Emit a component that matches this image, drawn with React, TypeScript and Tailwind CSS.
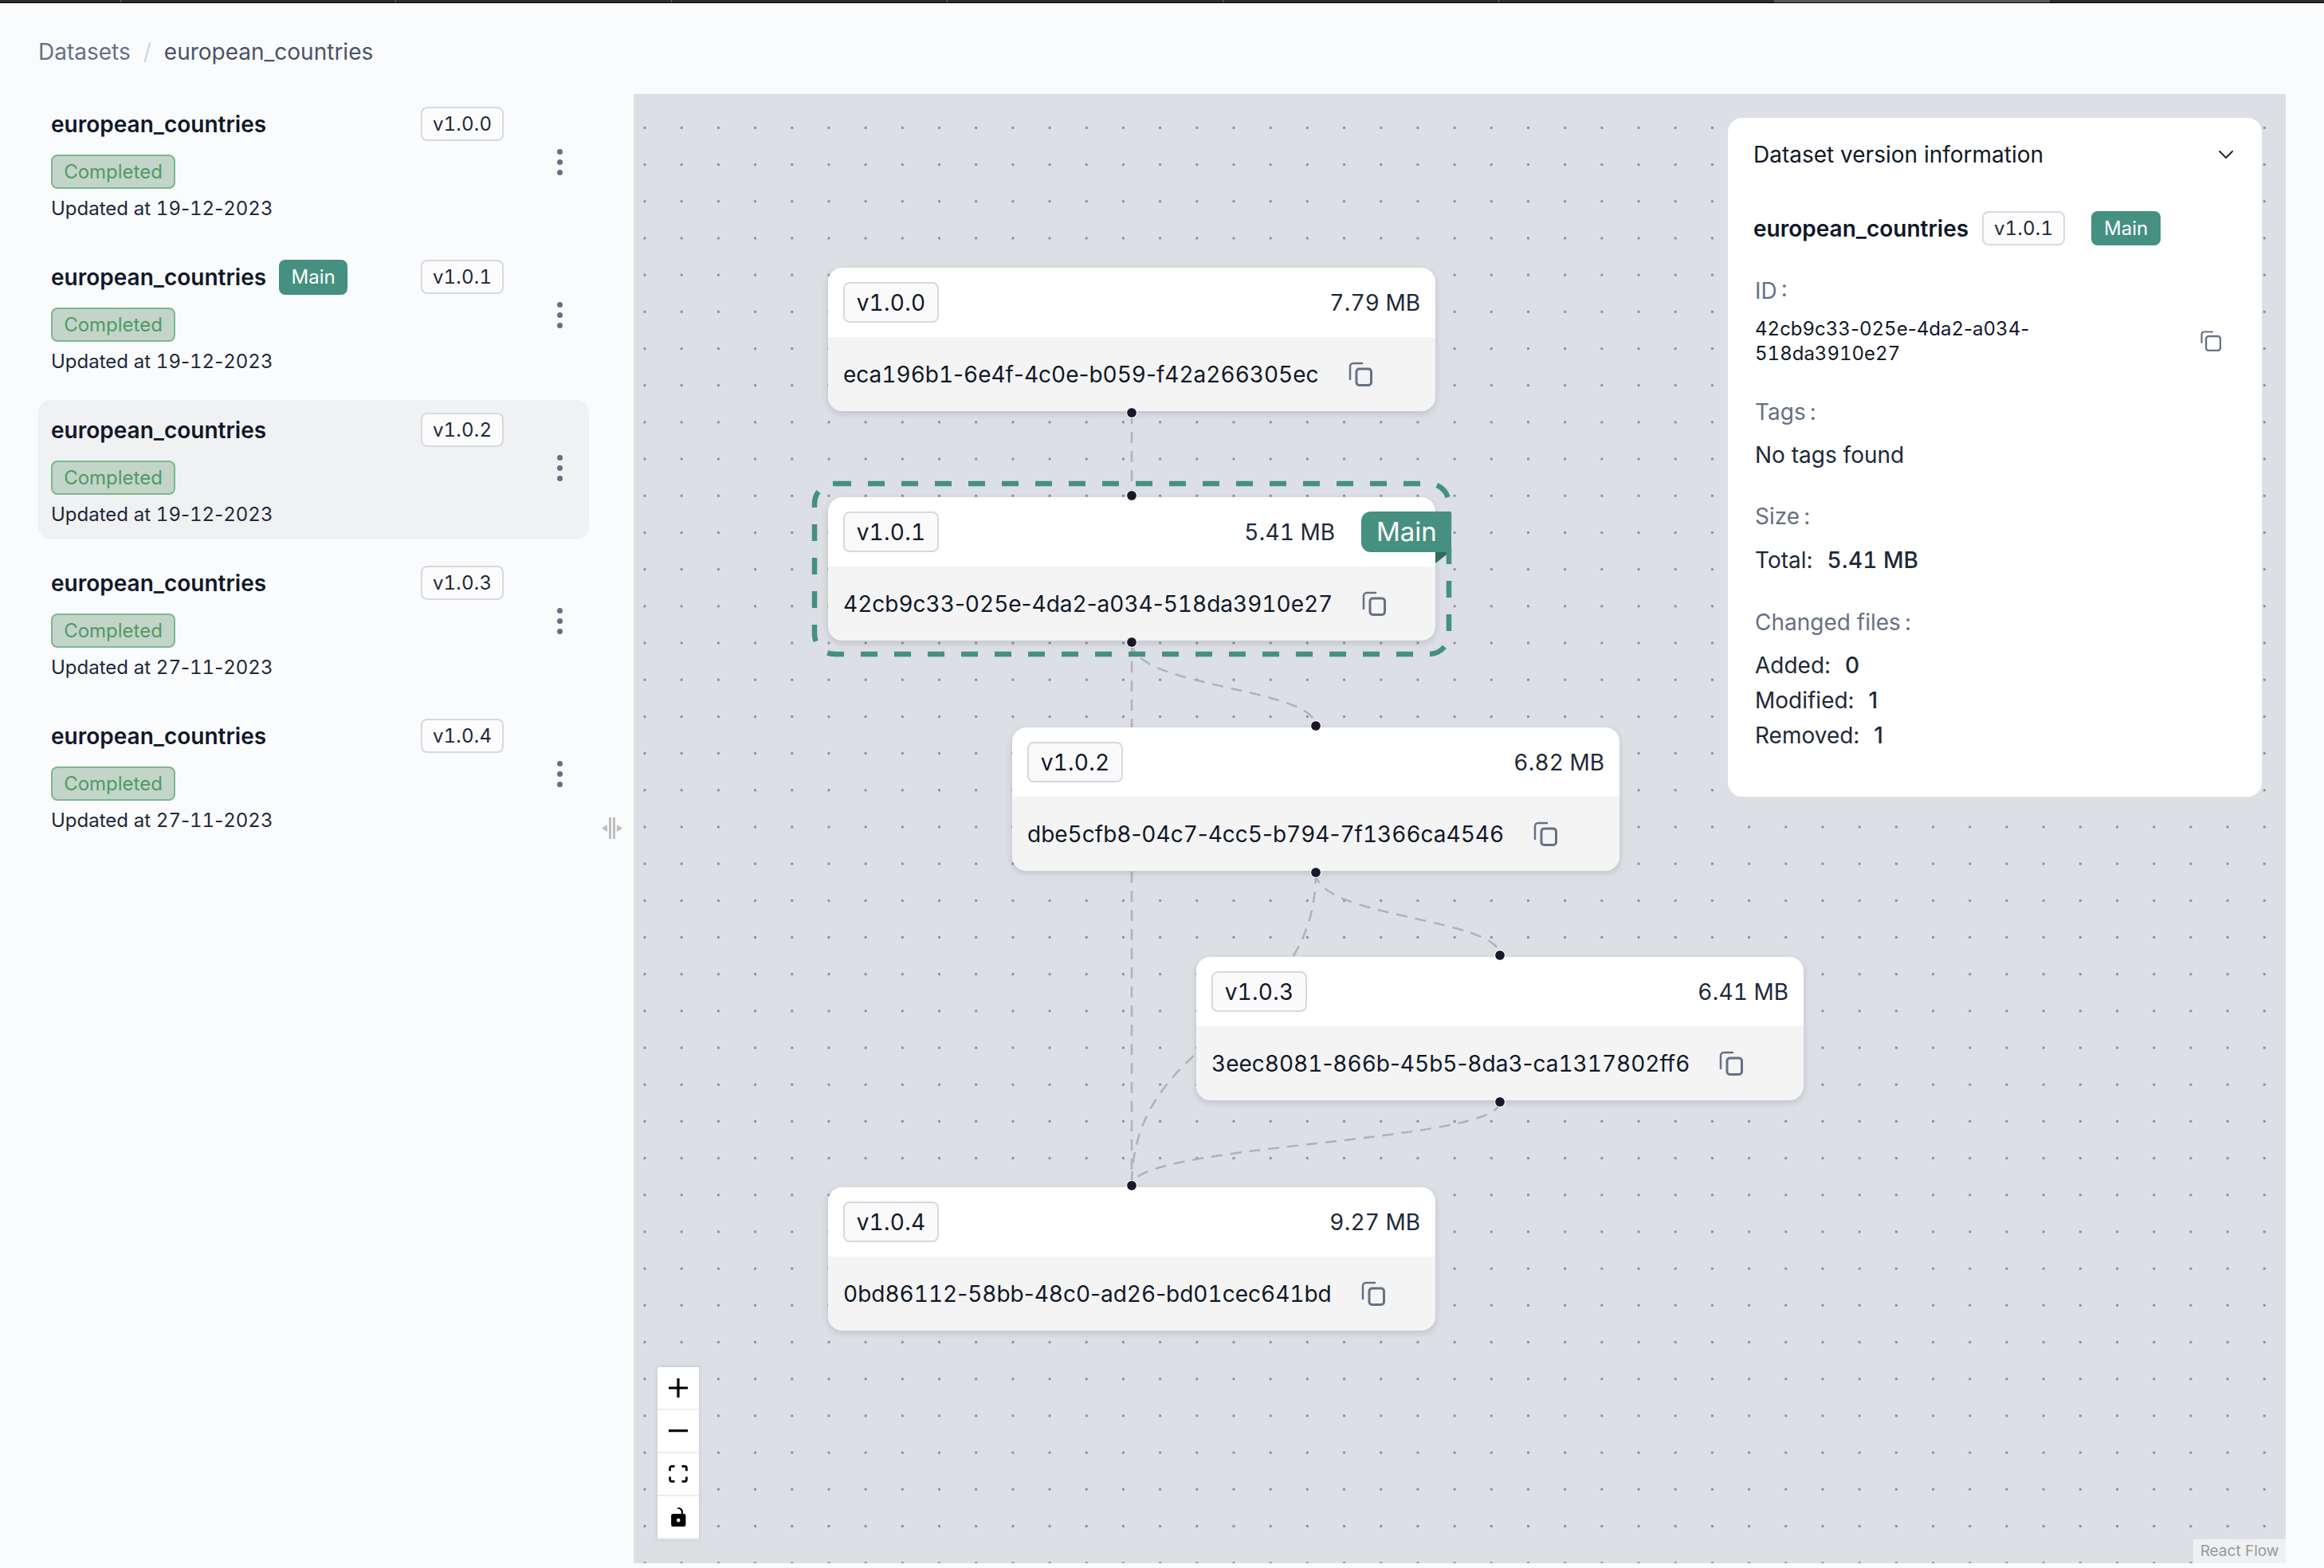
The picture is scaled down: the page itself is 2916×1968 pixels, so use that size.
import { ChevronDown } from "lucide-react";

const versions = [
  { version: "v1.0.0", date: "19-12-2023" },
  { version: "v1.0.1", date: "19-12-2023", main: true },
  { version: "v1.0.2", date: "19-12-2023", selected: true },
  { version: "v1.0.3", date: "27-11-2023" },
  { version: "v1.0.4", date: "27-11-2023" },
];

// digits are wide in the screenshot's Inter, hyphens and dots are not
function Digits({ text }: { text: string }) {
  return (
    <>
      {text.split(/([-.])/).map((part, i) =>
        i % 2 === 0 ? (
          <span key={i} className="tabular-nums">
            {part}
          </span>
        ) : (
          <span key={i}>{part}</span>
        )
      )}
    </>
  );
}

function CopyIcon({ className }: { className: string }) {
  return (
    <svg viewBox="0 0 30 31" fill="none" className={className}>
      <path d="M2 22V6a4 4 0 0 1 4-4h11" stroke="#667085" strokeWidth="2.5" strokeLinecap="round" />
      <rect x="10" y="9" width="18.5" height="20.5" rx="3.5" stroke="#667085" strokeWidth="3" />
    </svg>
  );
}

function SmallCopyIcon() {
  return (
    <svg viewBox="0 0 26 26" fill="none" className="w-[26px] h-[26px] shrink-0">
      <path d="M1.5 15V4.5a3 3 0 0 1 3-3H15" stroke="#667085" strokeWidth="2.2" strokeLinecap="round" />
      <rect x="7" y="7" width="18" height="18" rx="3.5" stroke="#667085" strokeWidth="2.4" />
    </svg>
  );
}

function VersionItem({ item }: { item: (typeof versions)[number] }) {
  return (
    <div className={`flex rounded-[16px] pl-4 pt-4 h-[175px] ${item.selected ? "bg-[#f0f1f3]" : ""}`}>
      <div className="w-[568px]">
        <div className="flex items-center h-[43px]">
          <span className="text-[28px] font-semibold text-[#101828]">european_countries</span>
          {item.main && (
            <span className="ml-[16px] w-[86px] h-[44px] rounded-[8px] bg-[#459080] text-white text-[24px] flex items-center justify-center">
              Main
            </span>
          )}
          <span className="ml-auto w-[104px] h-[43px] rounded-[8px] border-2 border-[#d5d9e0] bg-[#fcfcfd] text-[24px] text-[#1d2939] flex items-center justify-center">
            <Digits text={item.version} />
          </span>
        </div>
        <div className="mt-[17px] w-[156px] h-[43px] rounded-[8px] border-2 border-[#7cb88d] bg-[#c2d5c8] text-[24px] text-[#4f9a66] flex items-center justify-center">
          Completed
        </div>
        <p className="mt-[10px] text-[24px] leading-[30px] text-[#1d2939]">
          Updated at <Digits text={item.date} />
        </p>
      </div>
      <div className="ml-[67px] mt-[53px] flex flex-col gap-[6px] self-start">
        <span className="w-[7px] h-[7px] rounded-full bg-[#667085]" />
        <span className="w-[7px] h-[7px] rounded-full bg-[#667085]" />
        <span className="w-[7px] h-[7px] rounded-full bg-[#667085]" />
      </div>
    </div>
  );
}

function FlowNode({
  className,
  version,
  size,
  id,
  main,
  noTop,
  noBottom,
}: {
  className: string;
  version: string;
  size: string;
  id: string;
  main?: boolean;
  noTop?: boolean;
  noBottom?: boolean;
}) {
  return (
    <div className={`absolute w-[762px] h-[180px] rounded-[18px] shadow-[0_3px_8px_rgba(16,24,40,0.14)] ${className}`}>
      {!noTop && (
        <span className="absolute left-[375px] -top-[8px] w-[12px] h-[12px] rounded-full bg-[#1a192b] outline outline-white" />
      )}
      <div className="h-[87px] rounded-t-[18px] bg-white flex items-center pl-[19px] pr-[19px]">
        <span className="w-[120px] h-[51px] rounded-[8px] border-2 border-[#d5d9e0] bg-[#fafafb] text-[28px] text-[#101828] flex items-center justify-center">
          <Digits text={version} />
        </span>
        <span className={`ml-auto text-[28px] text-[#1d2939] ${main ? "mr-[107px]" : ""}`}>
          <Digits text={size} />
        </span>
      </div>
      <div className="h-[93px] rounded-b-[18px] bg-[#f4f4f5] flex items-center px-[19px] gap-[37px]">
        <span className="text-[28px] whitespace-nowrap text-[#101828]">
          <Digits text={id} />
        </span>
        <CopyIcon className="w-[30px] h-[31px] shrink-0" />
      </div>
      {!noBottom && (
        <span className="absolute left-[375px] -bottom-[8px] w-[12px] h-[12px] rounded-full bg-[#1a192b] outline outline-white" />
      )}
      {main && (
        <>
          <span className="absolute -right-[20px] top-[18px] w-[113px] h-[51px] rounded-l-[12px] bg-[#459080] text-white text-[33px] flex items-center pl-[19px]">
            Main
          </span>
          <svg viewBox="0 0 18 14" className="absolute -right-[18px] top-[69px] w-[18px] h-[14px]">
            <path d="M0 0h18L0 14z" fill="#2f6b5e" />
          </svg>
        </>
      )}
    </div>
  );
}

function Edges() {
  const edges = [
    "M1420 518V622",
    "M1420 806V1488",
    "M1420 806C1420 863 1651 863 1651 911",
    "M1651 1095C1651 1152 1882 1152 1882 1199",
    "M1651 1095C1651 1292 1420 1292 1420 1488",
    "M1882 1383C1882 1435 1420 1435 1420 1488",
  ];
  return (
    <svg viewBox="795 118 2073 1844" className="absolute inset-0 w-full h-full">
      {edges.map((d) => (
        <path key={d} d={d} fill="none" stroke="#b1b1b7" strokeWidth="2.5" strokeDasharray="14 10" />
      ))}
    </svg>
  );
}

function InfoPanel() {
  return (
    <div className="absolute top-[30px] right-[30px] w-[670px] h-[852px] rounded-[18px] bg-white pl-[32px] pr-[36px] text-[#1d2939]">
      <div className="h-[92px] flex items-center justify-between">
        <span className="text-[28px] text-[#101828]">Dataset version information</span>
        <ChevronDown className="w-[36px] h-[32px] text-[#1d2939] -mr-[9px]" strokeWidth={1.5} />
      </div>
      <div className="flex items-center h-[43px] mt-[25px]">
        <span className="text-[28px] font-semibold text-[#101828]">european_countries</span>
        <span className="ml-[17px] w-[104px] h-[43px] rounded-[8px] border-2 border-[#d5d9e0] bg-[#fcfcfd] text-[24px] flex items-center justify-center">
          <Digits text="v1.0.1" />
        </span>
        <span className="ml-[33px] w-[87px] h-[43px] rounded-[8px] bg-[#459080] text-white text-[24px] flex items-center justify-center">
          Main
        </span>
      </div>
      <div className="pl-[2px]">
        <p className="mt-[40px] text-[28px] leading-[34px] text-[#667085]">ID&thinsp;:</p>
        <div className="mt-[15px] flex items-center justify-between pr-[15px]">
          <p className="w-[400px] text-[24px] leading-[31px] text-[#101828]">
            <Digits text="42cb9c33-025e-4da2-a034-518da3910e27" />
          </p>
          <SmallCopyIcon />
        </div>
        <p className="mt-[41px] text-[28px] leading-[34px] text-[#667085]">Tags&thinsp;:</p>
        <p className="mt-[20px] text-[28px] leading-[34px]">No tags found</p>
        <p className="mt-[43px] text-[28px] leading-[34px] text-[#667085]">Size&thinsp;:</p>
        <p className="mt-[21px] text-[28px] leading-[34px]">
          Total:{" "}
          <span className="ml-[10px] font-medium">
            <Digits text="5.41 MB" />
          </span>
        </p>
        <p className="mt-[44px] text-[28px] leading-[34px] text-[#667085]">Changed files&thinsp;:</p>
        <p className="mt-[20px] text-[28px] leading-[34px]">
          Added: <span className="ml-[10px] font-medium">0</span>
        </p>
        <p className="mt-[10px] text-[28px] leading-[34px]">
          Modified: <span className="ml-[10px] font-medium">1</span>
        </p>
        <p className="mt-[10px] text-[28px] leading-[34px]">
          Removed: <span className="ml-[10px] font-medium">1</span>
        </p>
      </div>
    </div>
  );
}

const controlIcons = [
  { box: "0 0 32 32", cls: "w-[24px] h-[24px]", d: "M32 18.133H18.133V32h-4.266V18.133H0v-4.266h13.867V0h4.266v13.867H32z" },
  { box: "0 0 32 5", cls: "w-[24px] h-[4px]", d: "M0 0h32v4.2H0z" },
  {
    box: "0 0 32 30",
    cls: "w-[24px] h-[22px]",
    d: "M3.692 4.63c0-.53.4-.938.939-.938h5.215V0H4.708C2.13 0 0 2.054 0 4.63v5.216h3.692V4.631zM27.354 0h-5.2v3.692h5.17c.53 0 .984.4.984.939v5.215H32V4.631A4.624 4.624 0 0027.354 0zm.954 24.83c0 .532-.4.94-.939.94h-5.215v3.768h5.215c2.577 0 4.631-2.13 4.631-4.707v-5.139h-3.692v5.139zm-23.677.94c-.531 0-.939-.4-.939-.94v-5.138H0v5.139c0 2.577 2.13 4.707 4.708 4.707h5.138V25.77H4.631z",
  },
  {
    box: "0 0 25 32",
    cls: "w-[19px] h-[24px]",
    d: "M21.333 10.667H19.81V7.619C19.81 3.429 16.38 0 12.19 0c-4.114 1.828-1.37 2.133.305 2.438 1.676.305 4.42 2.59 4.42 5.181v3.048H3.047A3.056 3.056 0 000 13.714v15.238A3.056 3.056 0 003.048 32h18.285a3.056 3.056 0 003.048-3.048V13.714a3.056 3.056 0 00-3.048-3.047zM12.19 24.533a3.056 3.056 0 01-3.047-3.047 3.056 3.056 0 013.047-3.048 3.056 3.056 0 013.048 3.048 3.056 3.056 0 01-3.048 3.047z",
  },
];

export default function App() {
  return (
    <div className="h-[1968px] w-full flex flex-col bg-[#fafbfd] font-['Inter',sans-serif]">
      {/* Browser tab strip cut off at the top */}
      <div className="h-[4px] shrink-0 flex bg-[#2e2e2e] border-b border-black">
        <div className="w-[151px]" />
        <div className="w-[345px] border-l border-[#6b6b6b]" />
        <div className="w-[346px] border-l border-[#6b6b6b]" />
        <div className="w-[346px] border-l border-[#6b6b6b]" />
        <div className="w-[346px] border-l border-[#6b6b6b]" />
        <div className="w-[346px] border-l border-[#6b6b6b]" />
        <div className="w-[346px] border-l border-[#6b6b6b]" />
        <div className="w-[346px] bg-[#5a5a5a]" />
      </div>

      {/* Breadcrumb */}
      <div className="h-[114px] shrink-0 flex items-start pl-[48px] pt-[45px] text-[28px] leading-[32px] text-[#667085]">
        <span>Datasets</span>
        <span className="mx-[16px] text-[#d0d5dd]">/</span>
        <span className="text-[#475467]">european_countries</span>
      </div>

      <div className="flex flex-1 min-h-0 pb-[6px] pr-[48px]">
        {/* Sidebar */}
        <div className="relative w-[795px] shrink-0 pl-[48px]">
          <div className="w-[691px] flex flex-col gap-[17px]">
            {versions.map((item) => (
              <VersionItem key={item.version} item={item} />
            ))}
          </div>
          <svg viewBox="0 0 26 27" className="absolute left-[755px] top-[908px] w-[26px] h-[27px]">
            <path d="M9 0h3v27H9zM14 0h3v27h-3z" fill="#bdbdbd" />
            <path d="M0 13.5L7 9v9zM26 13.5L19 9v9z" fill="#bdbdbd" />
          </svg>
        </div>

        {/* Canvas */}
        <div className="relative flex-1 overflow-hidden bg-[#dcdfe4] bg-[radial-gradient(#8f9197_1.5px,transparent_1.7px)] bg-[length:46.2px_46.2px] bg-[position:-9.1px_19.3px]">
          <Edges />
          <FlowNode className="left-[244px] top-[218px]" version="v1.0.0" size="7.79 MB" id="eca196b1-6e4f-4c0e-b059-f42a266305ec" noTop />
          <FlowNode className="left-[244px] top-[506px]" version="v1.0.1" size="5.41 MB" id="42cb9c33-025e-4da2-a034-518da3910e27" main />
          <FlowNode className="left-[475px] top-[795px]" version="v1.0.2" size="6.82 MB" id="dbe5cfb8-04c7-4cc5-b794-7f1366ca4546" />
          <FlowNode className="left-[706px] top-[1083px]" version="v1.0.3" size="6.41 MB" id="3eec8081-866b-45b5-8da3-ca1317802ff6" />
          <FlowNode className="left-[244px] top-[1372px]" version="v1.0.4" size="9.27 MB" id="0bd86112-58bb-48c0-ad26-bd01cec641bd" noBottom />

          {/* Selected node outline */}
          <svg viewBox="0 0 804 222" className="absolute left-[223px] top-[485px] w-[804px] h-[222px] pointer-events-none">
            <rect x="4" y="4" width="796" height="214" rx="25" fill="none" stroke="#459080" strokeWidth="6.5" strokeDasharray="21 21" />
          </svg>

          <InfoPanel />

          {/* Zoom controls */}
          <div className="absolute left-[30px] top-[1598px] w-[52px] shadow-[0_0_6px_rgba(0,0,0,0.12)] bg-white">
            {controlIcons.map((icon) => (
              <div key={icon.box} className="h-[54px] border-b-2 border-[#eeeeee] flex items-center justify-center">
                <svg viewBox={icon.box} className={icon.cls}>
                  <path d={icon.d} fill="#000000" />
                </svg>
              </div>
            ))}
          </div>

          <div className="absolute right-0 bottom-0 w-[116px] h-[30px] bg-[#eef0f3] text-[#999999] text-[19px] flex items-center justify-center">
            React Flow
          </div>
        </div>
      </div>
    </div>
  );
}
